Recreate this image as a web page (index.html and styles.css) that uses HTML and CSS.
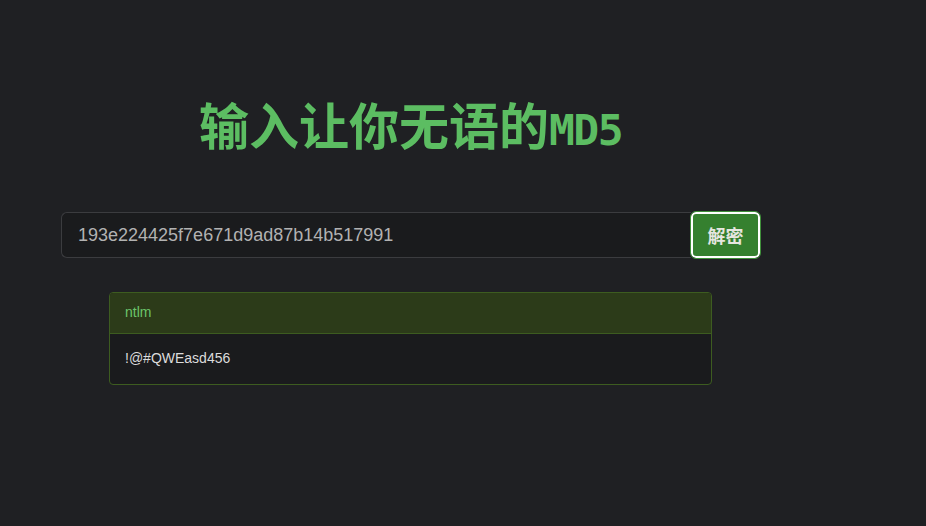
FILE: index.html
```html
<!DOCTYPE html>
<html lang="zh-CN">
<head>
    <meta charset="UTF-8">
    <meta name="viewport" content="width=device-width, initial-scale=1.0">
    <title>MD5</title>
    <link rel="stylesheet" href="styles.css">
</head>
<body>
    <div class="container">
        <h1 class="title">输入让你无语的<span class="md5">MD5</span></h1>
        <div class="input-group">
            <input type="text" class="hash-input" value="193e224425f7e671d9ad87b14b517991" autocomplete="off">
            <button class="btn-decode">解密</button>
        </div>
        <div class="panel">
            <div class="panel-heading">ntlm</div>
            <div class="panel-body">!@#QWEasd456</div>
        </div>
    </div>
</body>
</html>
```
FILE: styles.css
```css
body {
    margin: 0;
    padding: 0;
    background-color: #1f2023;
    font-family: "Liberation Sans", Arial, "Noto Sans CJK SC", sans-serif;
    font-size: 14px;
    line-height: 1.42857;
    color: #d8d8d8;
}
.container {
    width: 699px;
    margin-left: 61px;
    padding-top: 90px;
}
.title {
    margin: 0 0 49px 0;
    text-align: center;
    font-family: "Noto Sans CJK SC", sans-serif;
    font-size: 50px;
    line-height: 66px;
    font-weight: bold;
    color: #5cbd62;
}
.md5 {
    font-family: "DejaVu Sans Mono", monospace;
    font-size: 43px;
    letter-spacing: -1.5px;
}
.input-group {
    display: flex;
}
.hash-input {
    flex: 1;
    height: 46px;
    padding: 10px 16px;
    box-sizing: border-box;
    font-family: "Liberation Sans", Arial, sans-serif;
    font-size: 18px;
    color: #b2b2b2;
    background-color: #1a1b1d;
    border: 1px solid #3b3c3f;
    border-right: none;
    border-radius: 6px 0 0 6px;
    outline: none;
}
.btn-decode {
    width: 69px;
    height: 46px;
    padding: 0;
    box-sizing: border-box;
    font-family: "Noto Sans CJK SC", sans-serif;
    font-size: 18px;
    font-weight: bold;
    color: #e6e6e0;
    background-color: #35802f;
    border: 2px solid #ffffff;
    border-radius: 5px;
    outline: 1px solid #3f8f3a;
    outline-offset: 0;
    cursor: pointer;
}
.panel {
    margin: 34px 48px 0 48px;
    background-color: #1a1b1d;
    border: 1px solid #3d5c20;
    border-radius: 4px;
}
.panel-heading {
    padding: 10px 15px;
    color: #6bc56a;
    background-color: #2c3b19;
    border-bottom: 1px solid #3d5c20;
    border-radius: 3px 3px 0 0;
}
.panel-body {
    padding: 15px;
    color: #dcdcdc;
}
```
